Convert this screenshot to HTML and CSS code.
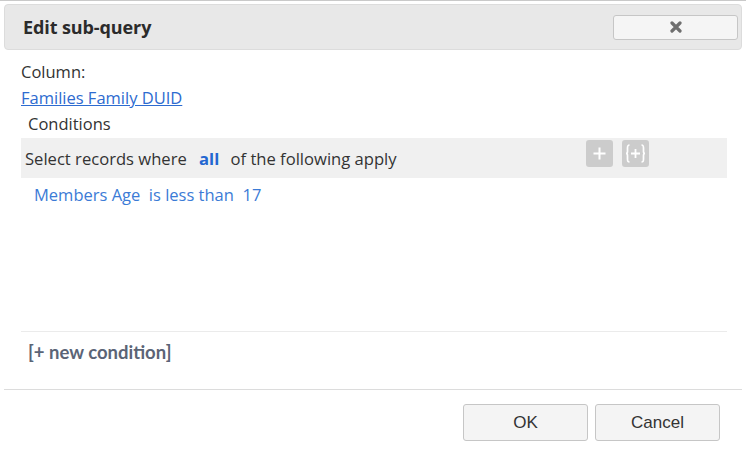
FILE: index.html
```html
<!DOCTYPE html>
<html>
<head>
<meta charset="utf-8">
<link rel="stylesheet" href="styles.css">
</head>
<body>
<div class="dialog">
  <div class="titlebar">
    <span class="title">Edit sub-query</span>
    <button class="close" aria-label="close">
      <svg width="12" height="12" viewBox="0 0 12 12"><path d="M2 2 L10 10 M10 2 L2 10" stroke="#6f6f6f" stroke-width="3.2" stroke-linecap="round"/></svg>
    </button>
  </div>
  <div class="content">
    <div class="row label">Column:</div>
    <div class="row"><a class="link" href="#">Families Family DUID</a></div>
    <div class="row conditions">Conditions</div>
    <div class="bar">
      <span class="bar-text">Select records where <b class="all">all</b> of the following apply</span>
      <span class="tools">
        <span class="tool">
          <svg width="27" height="27" viewBox="0 0 27 27"><path d="M13.5 7.5 V19.5 M7.5 13.5 H19.5" stroke="#fff" stroke-width="2"/></svg>
        </span>
        <span class="tool">
          <svg width="27" height="27" viewBox="0 0 27 27"><path d="M7.5 5 C5.5 5 5.5 6 5.5 8 V11.5 C5.5 12.8 5 13.5 4 13.5 C5 13.5 5.5 14.2 5.5 15.5 V19 C5.5 21 5.5 22 7.5 22" fill="none" stroke="#fff" stroke-width="1.7"/><path d="M19.5 5 C21.5 5 21.5 6 21.5 8 V11.5 C21.5 12.8 22 13.5 23 13.5 C22 13.5 21.5 14.2 21.5 15.5 V19 C21.5 21 21.5 22 19.5 22" fill="none" stroke="#fff" stroke-width="1.7"/><path d="M13.5 9 V18 M9 13.5 H18" stroke="#fff" stroke-width="1.8"/></svg>
        </span>
      </span>
    </div>
    <div class="cond">Members Age&nbsp; is less than&nbsp; 17</div>
    <div class="spacer"></div>
    <div class="newcond">[+ new condition]</div>
  </div>
  <div class="footer">
    <button class="btn">OK</button>
    <button class="btn">Cancel</button>
  </div>
</div>
</body>
</html>
```
FILE: styles.css
```css
html, body {
  margin: 0;
  padding: 0;
  background: #fff;
}
body {
  font-family: "Open Sans", "Noto Sans", sans-serif;
  color: #333;
}
.dialog {
  border-top: 1px solid #c9c9c9;
  padding: 3px 4px 0 4px;
  height: 455px;
  box-sizing: border-box;
}
.titlebar {
  height: 46px;
  box-sizing: border-box;
  border: 1px solid #dcdcdc;
  border-radius: 4px;
  background: #e8e8e8;
  display: flex;
  align-items: center;
  justify-content: space-between;
  padding: 0 3px 0 18px;
}
.title {
  font-family: "Open Sans", sans-serif;
  font-weight: 700;
  font-size: 18px;
  color: #2b2b2b;
  letter-spacing: -0.1px;
}
.close {
  width: 125px;
  height: 25px;
  border: 1px solid #c6c6c6;
  border-radius: 3px;
  background: #f5f5f5;
  display: flex;
  align-items: center;
  justify-content: center;
  padding: 0;
  margin-top: 0;
}
.content {
  padding: 9px 15px 0 17px;
}
.row {
  height: 26px;
  line-height: 26px;
  font-size: 16.5px;
}
.label {
  color: #333;
}
.link {
  color: #2d6bd0;
  text-decoration: underline;
}
.conditions {
  padding-left: 7px;
}
.bar {
  margin-top: 1px;
  height: 40px;
  background: #f0f0f0;
  display: flex;
  align-items: center;
  justify-content: space-between;
  padding-left: 4px;
  font-size: 16.6px;
}
.bar-text {
  color: #333;
}
.all {
  color: #2367d1;
  font-weight: 700;
  margin: 0 7px 0 8px;
}
.tools {
  display: flex;
  gap: 9px;
  align-self: flex-start;
  margin-top: 2px;
  margin-right: 78px;
}
.tool {
  width: 27px;
  height: 27px;
  background: #cccccc;
  border-radius: 3px;
  display: block;
}
.tool svg {
  display: block;
}
.cond {
  height: 34px;
  line-height: 34px;
  padding-left: 13px;
  font-size: 16.5px;
  color: #3b7bd6;
}
.spacer {
  height: 119px;
  border-bottom: 1px solid #ebebeb;
}
.newcond {
  height: 42px;
  line-height: 40px;
  padding-left: 7px;
  font-family: "Lato", sans-serif;
  font-weight: 700;
  font-size: 18.5px;
  color: #5b6476;
}
.footer {
  border-top: 1px solid #dcdcdc;
  margin-top: 15px;
  display: flex;
  justify-content: flex-end;
  gap: 7px;
  padding: 14px 22px 0 0;
}
.btn {
  width: 125px;
  height: 37px;
  border: 1px solid #c6c6c6;
  border-radius: 3px;
  background: #f4f4f4;
  font-family: "Liberation Sans", Arial, sans-serif;
  font-size: 17px;
  color: #333;
}
```
